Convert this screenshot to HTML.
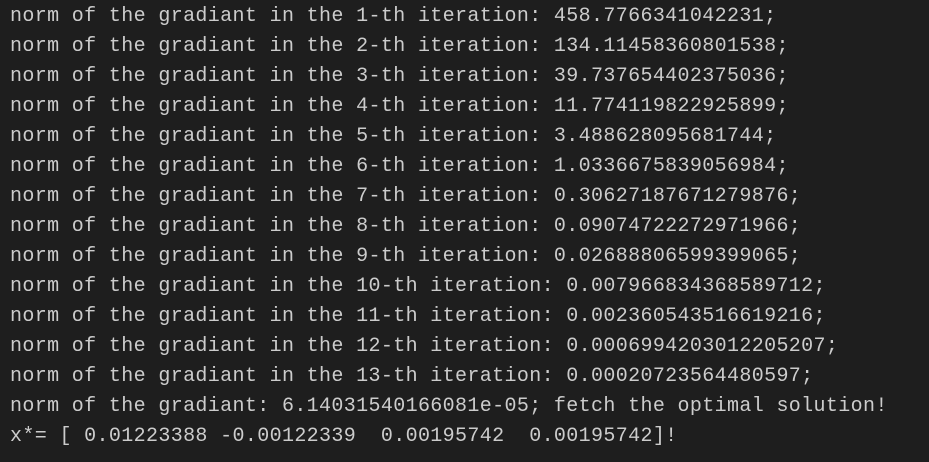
<!DOCTYPE html>
<html><head><meta charset="utf-8"><style>
html,body{margin:0;padding:0;background:#1e1e1e;width:929px;height:462px;overflow:hidden}
pre{margin:0;padding:2px 0 0 10px;font-family:"Liberation Mono",monospace;font-size:20px;letter-spacing:0.36px;line-height:30px;color:#cccccc;white-space:pre}
</style></head><body><pre>norm of the gradiant in the 1-th iteration: 458.7766341042231;
norm of the gradiant in the 2-th iteration: 134.11458360801538;
norm of the gradiant in the 3-th iteration: 39.737654402375036;
norm of the gradiant in the 4-th iteration: 11.774119822925899;
norm of the gradiant in the 5-th iteration: 3.488628095681744;
norm of the gradiant in the 6-th iteration: 1.0336675839056984;
norm of the gradiant in the 7-th iteration: 0.30627187671279876;
norm of the gradiant in the 8-th iteration: 0.09074722272971966;
norm of the gradiant in the 9-th iteration: 0.02688806599399065;
norm of the gradiant in the 10-th iteration: 0.007966834368589712;
norm of the gradiant in the 11-th iteration: 0.002360543516619216;
norm of the gradiant in the 12-th iteration: 0.0006994203012205207;
norm of the gradiant in the 13-th iteration: 0.00020723564480597;
norm of the gradiant: 6.14031540166081e-05; fetch the optimal solution!
x*= [ 0.01223388 -0.00122339  0.00195742  0.00195742]!</pre></body></html>
